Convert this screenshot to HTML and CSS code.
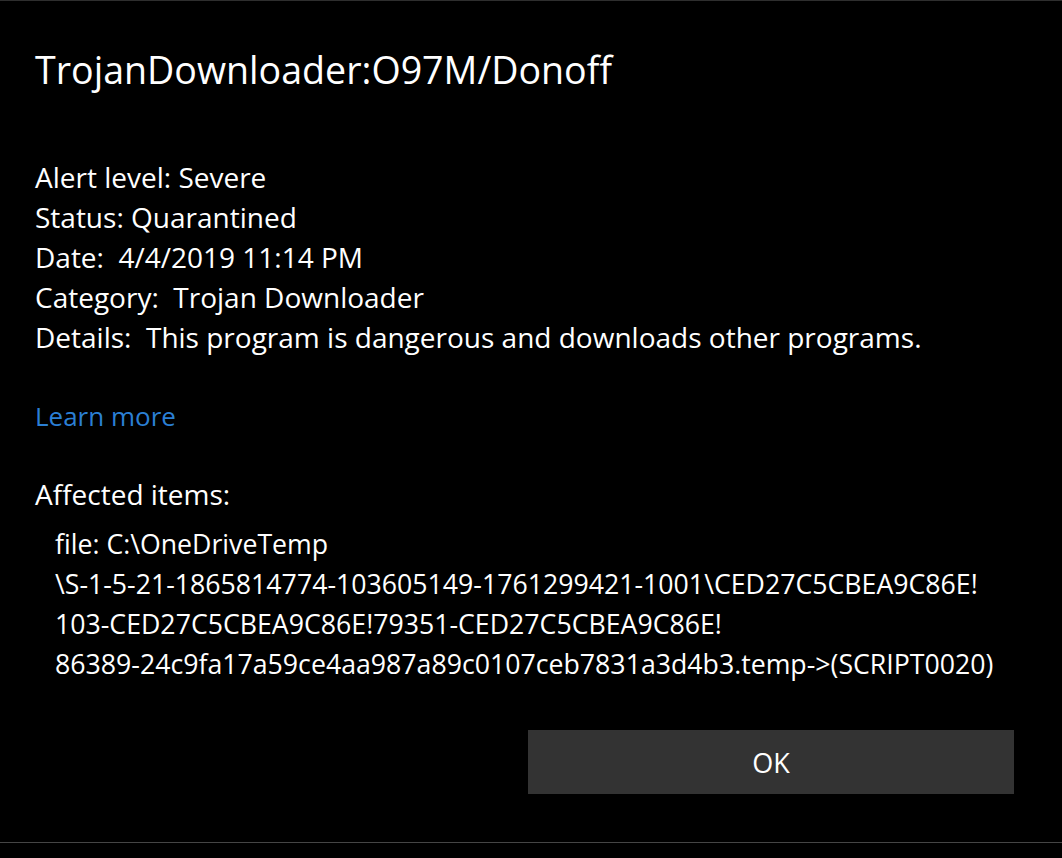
FILE: index.html
```html
<!DOCTYPE html>
<html lang="en">
<head>
  <meta charset="UTF-8" />
  <title>TrojanDownloader:O97M/Donoff</title>
  <link rel="stylesheet" href="styles.css">
</head>
<body>
  <div class="dialog">
    <h1 class="title">TrojanDownloader:O97M/Donoff</h1>

    <div class="facts">
      <div>Alert level: Severe</div>
      <div>Status: Quarantined</div>
      <div>Date:&nbsp; 4/4/2019 11:14 PM</div>
      <div>Category:&nbsp; Trojan Downloader</div>
      <div>Details:&nbsp; This program is dangerous and downloads other programs.</div>
    </div>

    <a class="learn" href="#">Learn more</a>

    <div class="affected">Affected items:</div>
    <div class="items">
      <div>file: C:\OneDriveTemp</div>
      <div>\S-1-5-21-1865814774-103605149-1761299421-1001\CED27C5CBEA9C86E!</div>
      <div>103-CED27C5CBEA9C86E!79351-CED27C5CBEA9C86E!</div>
      <div>86389-24c9fa17a59ce4aa987a89c0107ceb7831a3d4b3.temp-&gt;(SCRIPT0020)</div>
    </div>

    <div class="actions">
      <button class="ok">OK</button>
    </div>
  </div>
</body>
</html>
```

FILE: styles.css
```css
body {
  margin: 0;
  background: #000;
  color: #fff;
  font-family: 'Open Sans', sans-serif;
}

.dialog {
  height: 843px;
  box-sizing: border-box;
  border-top: 1px solid #2e2e2e;
  border-bottom: 1px solid #454545;
  padding: 45px 48px 0 35px;
  display: flex;
  flex-direction: column;
}

.title {
  margin: 0;
  font-size: 37.6px;
  font-weight: 400;
  line-height: 48px;
}

.facts {
  margin-top: 63px;
  font-size: 28px;
  line-height: 40px;
}

.learn {
  margin-top: 39px;
  font-size: 26px;
  line-height: 40px;
  color: #2b7fd4;
  text-decoration: none;
  align-self: flex-start;
}

.affected {
  margin-top: 38px;
  font-size: 28px;
  line-height: 40px;
}

.items {
  margin-top: 10px;
  padding-left: 20px;
  font-size: 26.7px;
  line-height: 40px;
}

.actions {
  margin-top: 46px;
  display: flex;
  justify-content: flex-end;
}

.ok {
  width: 486px;
  height: 64px;
  border: none;
  background: #333;
  color: #fff;
  font-family: inherit;
  font-size: 27px;
}
```
